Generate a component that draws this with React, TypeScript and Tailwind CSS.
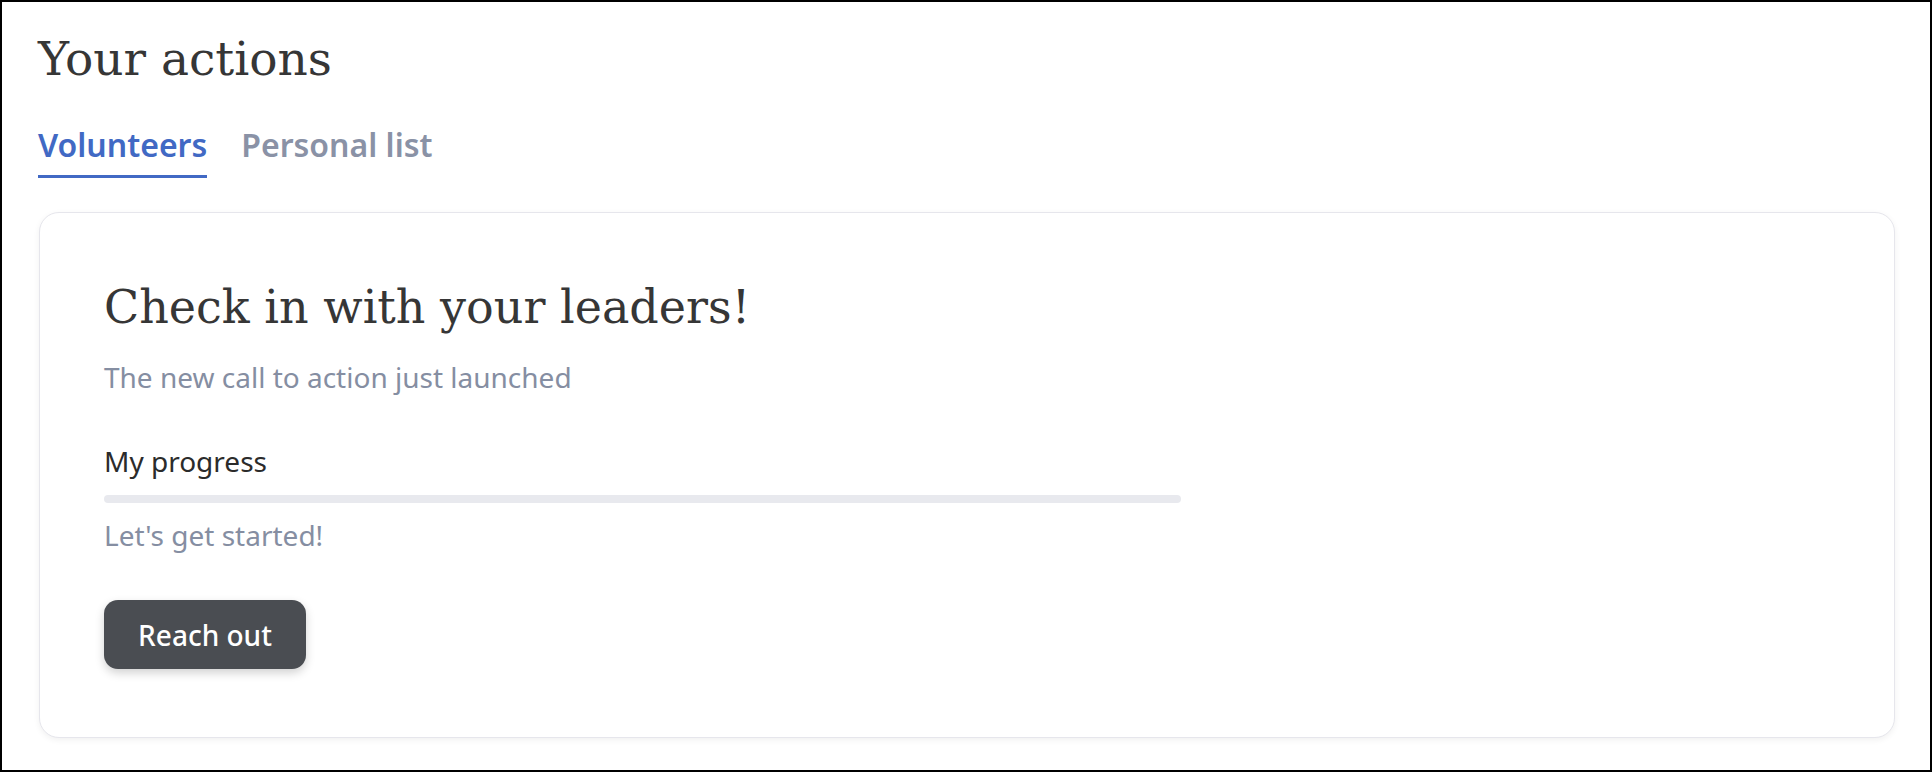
import React, { useState } from 'react';

const serif = { fontFamily: '"DejaVu Serif", serif' };

const App: React.FC = () => {
  const [tab, setTab] = useState<'volunteers' | 'personal'>('volunteers');

  return (
    <div className="h-[772px] w-full border-2 border-black bg-white pl-[36px] pr-[35px] font-['Noto_Sans',sans-serif]">
      <h1 className="pt-[29px] text-[47px] leading-[56px] text-[#363636]" style={serif}>
        Your actions
      </h1>

      <div className="mt-[38px] flex gap-[34px]">
        <button
          onClick={() => setTab('volunteers')}
          className={
            tab === 'volunteers'
              ? 'border-b-[3px] border-[#4169c4] pb-[10px] text-[32px] leading-[40px] font-semibold text-[#4169c4]'
              : 'border-b-[3px] border-transparent pb-[10px] text-[32px] leading-[40px] font-semibold text-[#8a92a6]'
          }
        >
          Volunteers
        </button>
        <button
          onClick={() => setTab('personal')}
          className={
            tab === 'personal'
              ? 'border-b-[3px] border-[#4169c4] pb-[10px] text-[32px] leading-[40px] font-semibold text-[#4169c4]'
              : 'border-b-[3px] border-transparent pb-[10px] text-[32px] leading-[40px] font-semibold text-[#8a92a6]'
          }
        >
          Personal list
        </button>
      </div>

      <div className="mt-[34px] ml-[1px] rounded-[20px] border border-[#e6e6ec] bg-white pl-[64px] pr-[66px] pt-[66px] pb-[68px] shadow-[0_2px_6px_rgba(0,0,0,0.06)]">
        <h2 className="text-[46px] leading-[56px] text-[#363636]" style={serif}>
          Check in with your leaders!
        </h2>
        <p className="mt-[24px] text-[28px] leading-[36px] text-[#858ea2]">
          The new call to action just launched
        </p>

        <p className="mt-[48px] text-[28px] leading-[36px] text-[#2b2b2b]">My progress</p>
        <div className="mt-[16px] h-[8px] w-[1077px] rounded-full bg-[#e8e9ee]" />
        <p className="mt-[14px] text-[28px] leading-[36px] text-[#858ea2]">Let's get started!</p>

        <button className="mt-[47px] h-[69px] w-[202px] rounded-[14px] bg-[#4a4d52] text-[28px] font-medium text-white shadow-[0_4px_10px_rgba(0,0,0,0.18)]">
          Reach out
        </button>
      </div>
    </div>
  );
};

export default App;
